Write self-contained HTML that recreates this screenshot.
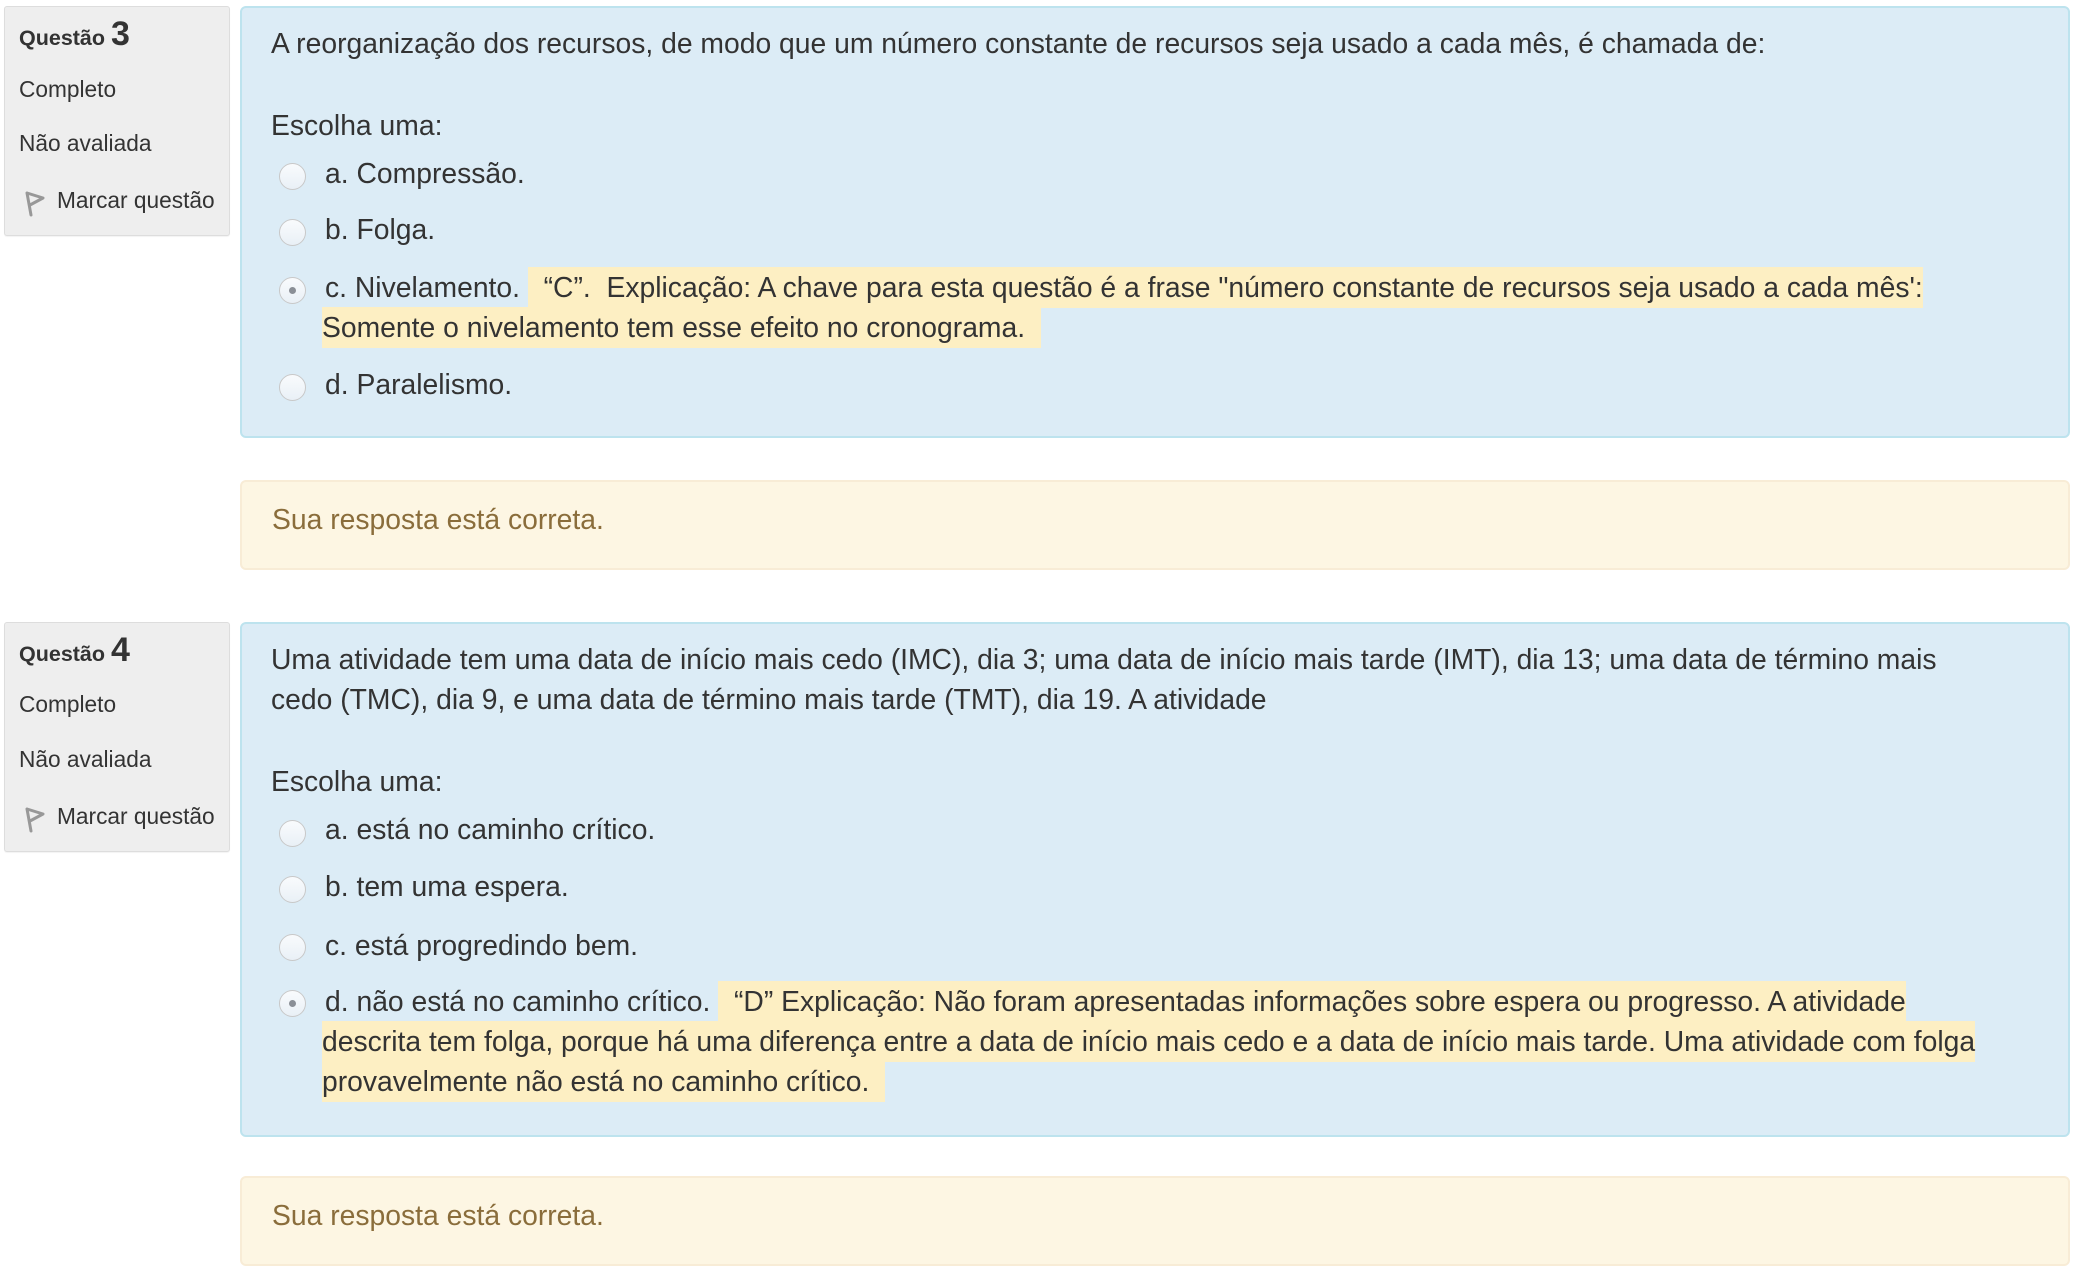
<!DOCTYPE html>
<html><head><meta charset="utf-8"><style>
html,body{margin:0;padding:0;background:#fff;width:2074px;height:1269px;overflow:hidden;position:relative;font-family:"Liberation Sans",Arial,sans-serif;color:#333}
.side{position:absolute;left:4px;width:224px;background:#eee;border:1px solid #ddd;border-radius:3px;box-shadow:0 1px 1px rgba(0,0,0,.05)}
.side .t{position:absolute;left:14px;font-size:22.7px;white-space:nowrap;line-height:28px}
.qn{font-weight:bold;font-size:21.5px!important}
.qn b{font-size:34px}
.blue{position:absolute;left:240px;width:1826px;background:#dcecf6;border:2px solid #bde3ee;border-radius:6px}
.fb{position:absolute;left:240px;width:1826px;height:86px;background:#fdf6e3;border:2px solid #f8ecd6;border-radius:6px}
.fb span{position:absolute;left:30px;top:21px;font-size:28.3px;color:#8a6d3b}
.l{position:absolute;font-size:28.3px;line-height:40px;white-space:nowrap}
.h{background:#fdefc3;padding:4px 0 5px}
.r{position:absolute;width:27px;height:27px;border-radius:50%;border:1px solid #c8c8c8;background:linear-gradient(#f9fbfd,#e9f0f6);box-sizing:border-box}
.r.c::after{content:"";position:absolute;left:9px;top:9px;width:7px;height:7px;border-radius:50%;background:#8a8f96}
svg.f{position:absolute;left:18px}
</style></head><body>

<!-- Q3 -->
<div class="side" style="top:6px;height:228px">
 <div class="t qn" style="top:13px">Questão <b>3</b></div>
 <div class="t" style="top:68px">Completo</div>
 <div class="t" style="top:122px">Não avaliada</div>
 <svg class="f" style="top:182px" width="26" height="30" viewBox="0 0 26 30"><path d="M4 4 L8 26 M4 4 L20 9 L7 16" fill="none" stroke="#888" stroke-width="3" stroke-linejoin="round" stroke-linecap="round" opacity=".85"/></svg>
 <div class="t" style="top:179px;left:52px">Marcar questão</div>
</div>
<div class="blue" style="top:6px;height:428px"></div>
<div class="l" style="left:271px;top:23px">A reorganização dos recursos, de modo que um número constante de recursos seja usado a cada mês, é chamada de:</div>
<div class="l" style="left:271px;top:105px">Escolha uma:</div>
<div class="r" style="left:279px;top:163px"></div><div class="l" style="left:325px;top:153px">a. Compressão.</div>
<div class="r" style="left:279px;top:219px"></div><div class="l" style="left:325px;top:209px">b. Folga.</div>
<div class="r c" style="left:279px;top:277px"></div><div class="l" style="left:325px;top:267px">c. Nivelamento. <span class="h">&nbsp;&nbsp;“C”.&nbsp; Explicação: A chave para esta questão é a frase "número constante de recursos seja usado a cada mês':</span></div>
<div class="l" style="left:322px;top:307px"><span class="h">Somente o nivelamento tem esse efeito no cronograma.&nbsp;&nbsp;</span></div>
<div class="r" style="left:279px;top:374px"></div><div class="l" style="left:325px;top:364px">d. Paralelismo.</div>

<div class="fb" style="top:480px"><span>Sua resposta está correta.</span></div>

<!-- Q4 -->
<div class="side" style="top:622px;height:228px">
 <div class="t qn" style="top:13px">Questão <b>4</b></div>
 <div class="t" style="top:67px">Completo</div>
 <div class="t" style="top:122px">Não avaliada</div>
 <svg class="f" style="top:182px" width="26" height="30" viewBox="0 0 26 30"><path d="M4 4 L8 26 M4 4 L20 9 L7 16" fill="none" stroke="#888" stroke-width="3" stroke-linejoin="round" stroke-linecap="round" opacity=".85"/></svg>
 <div class="t" style="top:179px;left:52px">Marcar questão</div>
</div>
<div class="blue" style="top:622px;height:511px"></div>
<div class="l" style="left:271px;top:639px">Uma atividade tem uma data de início mais cedo (IMC), dia 3; uma data de início mais tarde (IMT), dia 13; uma data de término mais</div>
<div class="l" style="left:271px;top:679px">cedo (TMC), dia 9, e uma data de término mais tarde (TMT), dia 19. A atividade</div>
<div class="l" style="left:271px;top:761px">Escolha uma:</div>
<div class="r" style="left:279px;top:820px"></div><div class="l" style="left:325px;top:809px">a. está no caminho crítico.</div>
<div class="r" style="left:279px;top:876px"></div><div class="l" style="left:325px;top:866px">b. tem uma espera.</div>
<div class="r" style="left:279px;top:934px"></div><div class="l" style="left:325px;top:925px">c. está progredindo bem.</div>
<div class="r c" style="left:279px;top:990px"></div><div class="l" style="left:325px;top:981px">d. não está no caminho crítico. <span class="h">&nbsp;&nbsp;“D” Explicação: Não foram apresentadas informações sobre espera ou progresso. A atividade</span></div>
<div class="l" style="left:322px;top:1021px"><span class="h">descrita tem folga, porque há uma diferença entre a data de início mais cedo e a data de início mais tarde. Uma atividade com folga</span></div>
<div class="l" style="left:322px;top:1061px"><span class="h">provavelmente não está no caminho crítico.&nbsp;&nbsp;</span></div>

<div class="fb" style="top:1176px"><span>Sua resposta está correta.</span></div>
</body></html>
